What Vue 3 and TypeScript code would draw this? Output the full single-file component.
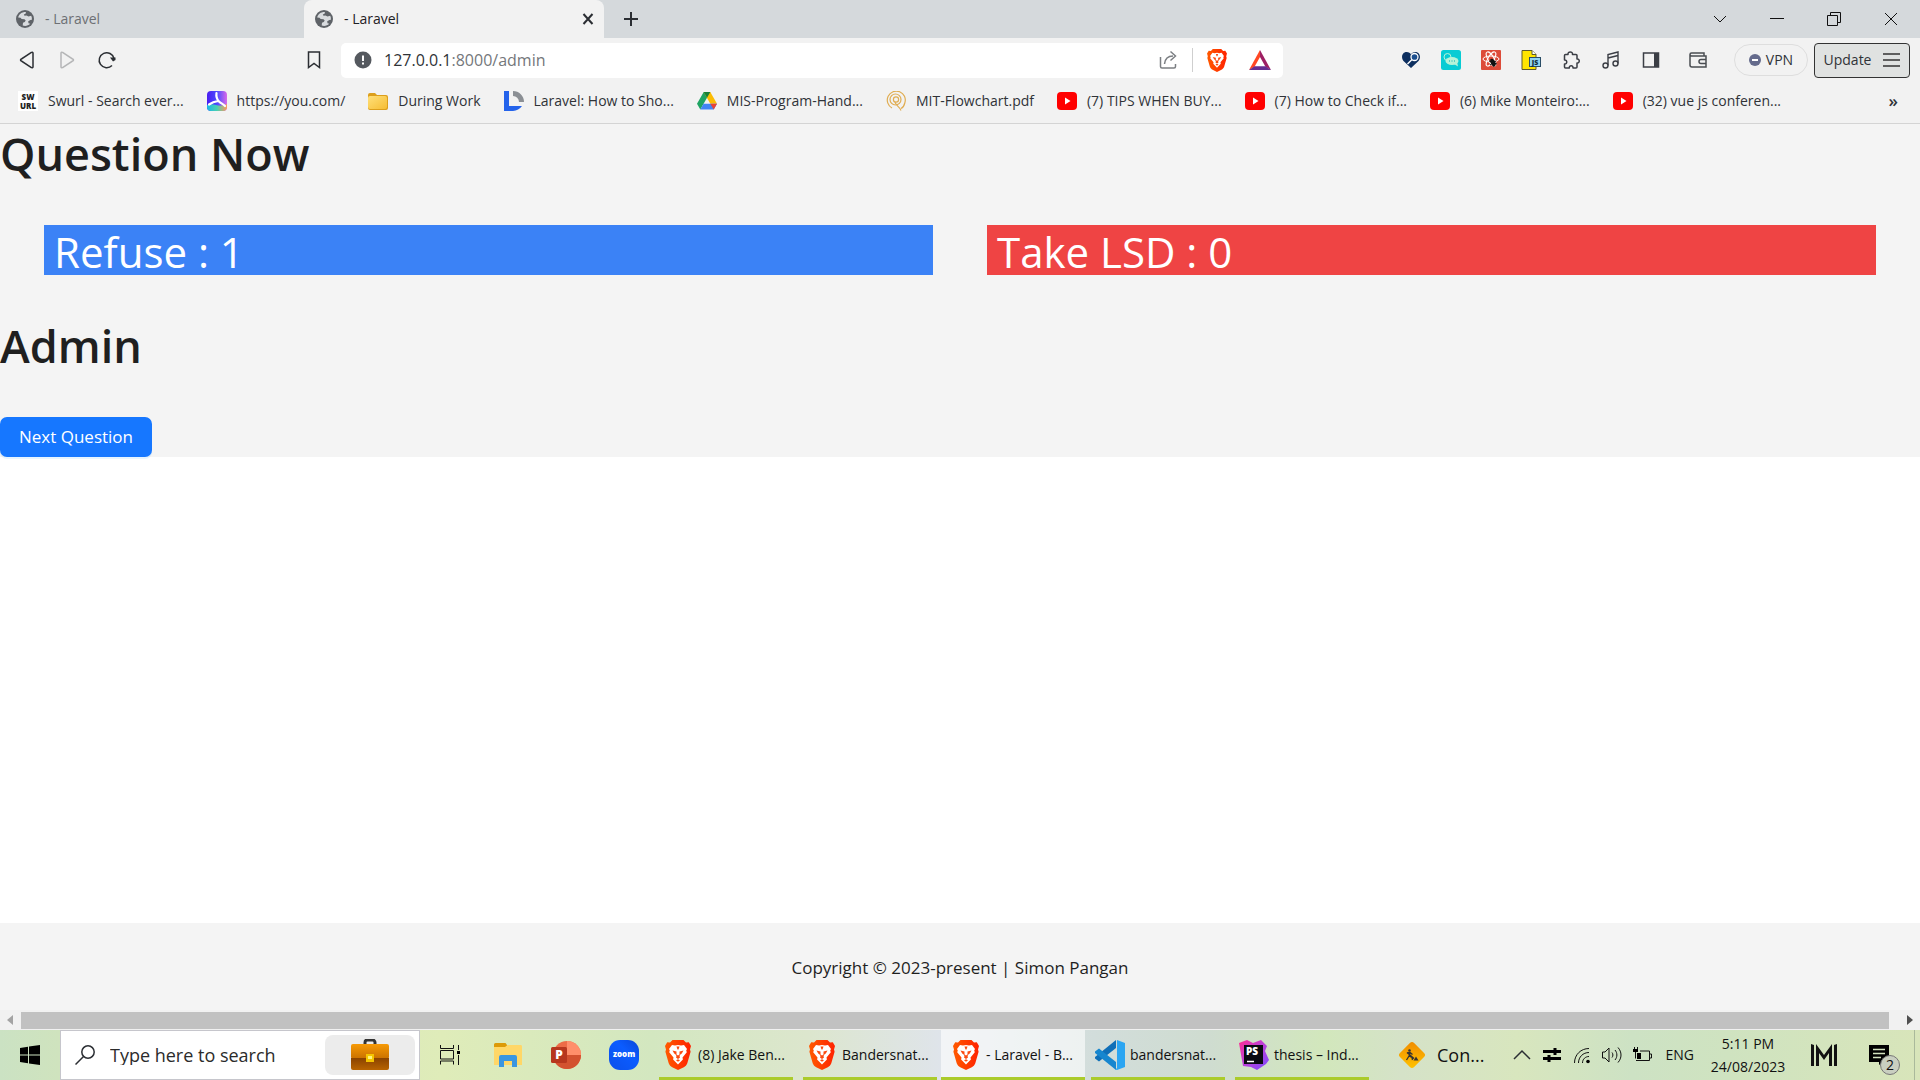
<script setup lang="ts">
interface Bookmark {
  icon: string
  label: string
  href: string
}

interface Task {
  icon: string
  label: string
  active?: boolean
}

interface Lettering {
  text: string
  x: number
  y: number
  size: number
  color: string
}

const bookmarks: Bookmark[] = [
  { icon: 'swurl', label: 'Swurl - Search ever...', href: '#swurl' },
  { icon: 'you', label: 'https://you.com/', href: '#you' },
  { icon: 'folder', label: 'During Work', href: '#during-work' },
  { icon: 'docs', label: 'Laravel: How to Sho...', href: '#laravel' },
  { icon: 'drive', label: 'MIS-Program-Hand...', href: '#mis' },
  { icon: 'mit', label: 'MIT-Flowchart.pdf', href: '#mit' },
  { icon: 'youtube', label: '(7) TIPS WHEN BUY...', href: '#tips' },
  { icon: 'youtube', label: '(7) How to Check if...', href: '#check' },
  { icon: 'youtube', label: '(6) Mike Monteiro:...', href: '#mike' },
  { icon: 'youtube', label: '(32) vue js conferen...', href: '#vue' },
]

const extensions: string[] = ['heart', 'chat', 'react', 'jsfile', 'puzzle', 'music', 'sidebar']

const tasks: Task[] = [
  { icon: 'brave', label: '(8) Jake Ben...' },
  { icon: 'brave', label: 'Bandersnat...' },
  { icon: 'brave', label: '- Laravel - B...', active: true },
  { icon: 'vscode', label: 'bandersnat...' },
  { icon: 'phpstorm', label: 'thesis – Ind...' },
]

// Letters printed on top of the icons that carry a word mark.
const lettering: Record<string, Lettering[]> = {
  swurl: [
    { text: 'SW', x: 10, y: 9, size: 8, color: '#222' },
    { text: 'URL', x: 10, y: 18, size: 8, color: '#222' },
  ],
  jsfile: [{ text: 'JS', x: 14, y: 15, size: 7, color: '#12303f' }],
  phpstorm: [{ text: 'PS', x: 13, y: 15, size: 10, color: '#fff' }],
}

const votes = { refuse: 1, take: 0 }
</script>

<template>
  <svg class="sprite" aria-hidden="true">
    <defs>
      <linearGradient id="g-brave" x1="0" y1="0" x2="1" y2="0">
        <stop offset="0" stop-color="#ff5a00" />
        <stop offset="1" stop-color="#ff2200" />
      </linearGradient>
      <linearGradient id="g-you" x1="0" y1="0" x2="1" y2="0">
        <stop offset="0" stop-color="#4a1cf0" />
        <stop offset="0.5" stop-color="#4b4bff" />
        <stop offset="1" stop-color="#d86ae8" />
      </linearGradient>
      <linearGradient id="g-you2" x1="0" y1="0" x2="1" y2="0">
        <stop offset="0" stop-color="#18b8e8" />
        <stop offset="0.5" stop-color="#4bd0b0" />
        <stop offset="1" stop-color="#ff9a5a" />
      </linearGradient>
      <linearGradient id="g-folder" x1="0" y1="0" x2="1" y2="1">
        <stop offset="0" stop-color="#ffe07a" />
        <stop offset="1" stop-color="#f6bd33" />
      </linearGradient>
      <linearGradient id="g-case" x1="0" y1="0" x2="0" y2="1">
        <stop offset="0" stop-color="#f79a05" />
        <stop offset="1" stop-color="#c97000" />
      </linearGradient>
      <linearGradient id="g-case2" x1="0" y1="0" x2="0" y2="1">
        <stop offset="0" stop-color="#8a4300" />
        <stop offset="1" stop-color="#b86400" />
      </linearGradient>
      <linearGradient id="g-zoom" x1="1" y1="0" x2="0" y2="1">
        <stop offset="0" stop-color="#0a47d8" />
        <stop offset="0.4" stop-color="#0b5cff" />
        <stop offset="1" stop-color="#0b50ea" />
      </linearGradient>
      <linearGradient id="g-ps" x1="0" y1="0" x2="1" y2="1">
        <stop offset="0" stop-color="#ff2d90" />
        <stop offset="0.45" stop-color="#c040d8" />
        <stop offset="1" stop-color="#7a4bff" />
      </linearGradient>
      <linearGradient id="g-sign" x1="0" y1="0" x2="1" y2="1">
        <stop offset="0" stop-color="#f08a00" />
        <stop offset="1" stop-color="#ffc400" />
      </linearGradient>
    </defs>

    <symbol id="globe" viewBox="0 0 18 18">
      <circle cx="9" cy="9" r="9" fill="#5f6368" />
      <path d="M10 2C6 1.800 3 4 2.200 7.500l2.300.3 1.200 1.200 2.800.2 1.200 1.300-1 1.500-1.700.8-.3 2.700c2.800.9 5.500.2 7.500-1.700l-1.700-.6-.3-1.900 2.200-1.300 1.500-.3c.1-1.500-.1-2.700-.7-3.900l-2.700.7-2-1-2 .3-.7-1.300 1.700-.7z" fill="#d9dcdf" />
    </symbol>
    <symbol id="brave" viewBox="0 0 26 30">
      <path d="M7.500 0h11l2.500 2.600 2.800-.3L26 6l-1 3.500.6 2.300-3.300 11.400c-.7 2-2 3-3.500 4L13 30l-5.800-2.800c-1.500-1-2.800-2-3.500-4L.4 11.800 1 9.500 0 6l2.200-3.700 2.800.3z" fill="url(#g-brave)" />
      <path d="M7 5l3 .6L13 5l3 .6 3-.6 3 4-.8 1.600.6 1.600-4.300 5.200.4 2L13 24.500l-4.900-5.100.4-2L4.200 12.200l.6-1.600L4 9z" fill="#fff" />
      <path d="M7.500 10.500l4 .9v3l1.500 1 1.500-1v-3l4-.9-1.700 3-1.200.8-1.100 1.700.5 1.600-2 1.400-2-1.400.5-1.600-1.100-1.700-1.200-.8zM11 20.200l2-1 2 1-2 1.600zM11.500 6.500h3l-1 3h-1z" fill="#fb4a10" />
    </symbol>
    <symbol id="bat" viewBox="0 0 22 20">
      <path d="M11 0L0 20l5.500-3.200L11 7z" fill="#ff4724" />
      <path d="M11 0l11 20-5.500-3.200L11 7z" fill="#9e1f63" />
      <path d="M0 20h22l-5.500-3.800h-11z" fill="#662d91" />
    </symbol>
    <symbol id="swurl" viewBox="0 0 20 20">
      <rect width="20" height="20" fill="#fff" />
    </symbol>
    <symbol id="you" viewBox="0 0 20 20">
      <rect width="20" height="20" rx="4" fill="url(#g-you)" />
      <path d="M0 14c3-1 6-1 9 0s7 1 11-1v3a4 4 0 0 1-4 4H4a4 4 0 0 1-4-4z" fill="url(#g-you2)" />
      <path d="M9.500 2c-.5 3.500.5 6.500 2.500 8.500 1.500 1.500 4 2.500 6 4.500M11 10c-3 .5-6 1.500-9 3.500" fill="none" stroke="#fff" stroke-width="2.200" stroke-linecap="round" />
    </symbol>
    <symbol id="folder" viewBox="0 0 20 18">
      <path d="M0 3a2 2 0 0 1 2-2h5l2 2h9a2 2 0 0 1 2 2v11a2 2 0 0 1-2 2H2a2 2 0 0 1-2-2z" fill="#dc9f1c" />
      <rect y="4" width="19" height="13" rx="2" fill="url(#g-folder)" />
    </symbol>
    <symbol id="docs" viewBox="0 0 20 20">
      <path d="M0 0h5v15h13a12 12 0 0 1-9 5H0z" fill="#2463eb" />
      <path d="M9 0a11 11 0 0 1 11 11h-5a6 6 0 0 0-6-6z" fill="#8b8f94" />
    </symbol>
    <symbol id="drive" viewBox="0 0 20 18">
      <path d="M6.700 0h6.600L6.600 11.700 3.300 17.500 0 11.700z" fill="#1fa463" />
      <path d="M6.700 0h6.600L20 11.700h-6.700z" fill="#fbbc04" />
      <path d="M6.700 0h6.600L10 5.800z" fill="#188038" />
      <path d="M6.500 11.700H20l-3.300 5.800H3.300z" fill="#4285f4" />
      <path d="M13.300 11.700H20l-3.300 5.800z" fill="#ea4335" />
    </symbol>
    <symbol id="mit" viewBox="0 0 20 20">
      <g fill="none" stroke="#e0ad52" stroke-width="1.200">
        <path d="M6 17A9 9 0 1 1 18.800 12c-.6 2.600-2 4.600-3.800 5.500" />
        <circle cx="9.500" cy="8.500" r="5.500" />
        <circle cx="10" cy="8.500" r="2.600" />
        <path d="M9 11c1 4 4 4 6 8.500" />
      </g>
    </symbol>
    <symbol id="youtube" viewBox="0 0 20 18">
      <rect width="20" height="18" rx="4" fill="#f00" />
      <path d="M8 5.500l5.500 3.500L8 12.500z" fill="#fff" />
    </symbol>
    <symbol id="heart" viewBox="0 0 20 20">
      <path d="M10 18L2.500 11C-.5 7 1.500 2 5.500 2 8 2 9.300 3.300 10 4.500 10.700 3.300 12 2 14.500 2 18.500 2 20.500 7 17.500 11z" fill="#0d2f5f" />
      <circle cx="13.500" cy="7" r="3.500" fill="#1c4f8f" stroke="#fff" stroke-width="1.300" />
      <path d="M11 9.500L6.500 14" stroke="#fff" stroke-width="1.500" />
    </symbol>
    <symbol id="chat" viewBox="0 0 20 20">
      <rect width="20" height="20" rx="2.500" fill="#08ccd4" />
      <circle cx="6.500" cy="7" r="3.500" fill="none" stroke="#b6f3d8" />
      <ellipse cx="11" cy="11" rx="6.500" ry="4" fill="#b6f3d8" />
      <path d="M13 14l4 2.500-1-5z" fill="#b6f3d8" />
      <path d="M8 11h1m1.500 0h1m1.500 0h1" stroke="#08a8ae" stroke-width="1.200" />
    </symbol>
    <symbol id="react" viewBox="0 0 20 20">
      <rect width="20" height="20" rx="1" fill="#dd4b39" />
      <g fill="none" stroke="#fff">
        <ellipse cx="10" cy="9" rx="8" ry="3" />
        <ellipse cx="10" cy="9" rx="8" ry="3" transform="rotate(60 10 9)" />
        <ellipse cx="10" cy="9" rx="8" ry="3" transform="rotate(120 10 9)" />
      </g>
      <ellipse cx="12" cy="12.500" rx="2.300" ry="4" fill="#111" transform="rotate(-25 12 12.500)" />
      <path d="M8 11l8 3M9 15l6-4M10 9l3 8" stroke="#111" />
    </symbol>
    <symbol id="jsfile" viewBox="0 0 20 20">
      <path d="M1 .5h10l4 4v15H1z" fill="#ffe500" stroke="#5c5a2c" />
      <path d="M11 .5v4h4" fill="#fff" stroke="#5c5a2c" />
      <rect x="8.500" y="7.500" width="11" height="9" fill="#8fd3f0" stroke="#2a4d66" />
    </symbol>
    <symbol id="puzzle" viewBox="0 0 20 20">
      <path d="M4.500 4.500H7C6.500 1 12 1 11.500 4.500h3.500a1 1 0 0 1 1 1V9c3-.5 3 4.500 0 4v4a1 1 0 0 1-1 1h-3c.3-3-4-3-3.700 0H4.500a1 1 0 0 1-1-1v-3c3 .3 3-4.300 0-4V5.500a1 1 0 0 1 1-1z" fill="none" stroke="#3b3e45" stroke-width="1.500" stroke-linejoin="round" />
    </symbol>
    <symbol id="music" viewBox="0 0 20 20">
      <g fill="none" stroke="#3b3e45" stroke-width="1.400">
        <circle cx="4.500" cy="15.500" r="2.500" />
        <circle cx="14.500" cy="13.500" r="2.500" />
        <path d="M7 15.500V4.500L17 2v11.500M7 8l10-2.500" />
      </g>
    </symbol>
    <symbol id="sidebar" viewBox="0 0 20 20">
      <rect x="2.500" y="3" width="15" height="14" fill="none" stroke="#3b3e45" stroke-width="1.500" />
      <path d="M13 3h5v14h-5z" fill="#3b3e45" />
    </symbol>
    <symbol id="wallet" viewBox="0 0 20 20">
      <g fill="none" stroke="#4a4d52" stroke-width="1.500">
        <path d="M16 6V3H3.500a1.500 1.500 0 0 0 0 3H18v11H4a2 2 0 0 1-2-2V4.500" />
        <path d="M18 9.500h-5a2 2 0 0 0 0 4h5" />
      </g>
    </symbol>
    <symbol id="explorer" viewBox="0 0 28 24">
      <path d="M0 1.500A1.500 1.500 0 0 1 1.500 0h10L13 2v4H0z" fill="#dc9a08" />
      <path d="M0 4h11l2.500-2h13A1.500 1.500 0 0 1 28 3.500V22H0z" fill="#ffd767" />
      <path d="M5 24V14a2 2 0 0 1 2-2h14a2 2 0 0 1 2 2v10h-5v-6h-8v6z" fill="#3a96e0" />
    </symbol>
    <symbol id="powerpoint" viewBox="0 0 30 28">
      <circle cx="16" cy="14" r="14" fill="#ed6c47" />
      <path d="M16 0a14 14 0 0 1 14 14H16z" fill="#ff8f6b" />
      <path d="M2 14h28a14 14 0 0 1-28 0z" fill="#d35230" />
      <rect y="6" width="16" height="16" rx="1.500" fill="#b7371e" />
    </symbol>
    <symbol id="zoom" viewBox="0 0 30 30">
      <rect width="30" height="30" rx="11" fill="url(#g-zoom)" />
    </symbol>
    <symbol id="vscode" viewBox="0 0 30 30">
      <path d="M21 0v8L4 21.500l-4-3V17z" fill="#0f6fb8" />
      <path d="M0 11.500l4-3L21 22v8L0 13z" fill="#1686cf" />
      <path d="M22 0l8 3v24l-8 3-1.500-.6L22 28z" fill="#2aa5f2" />
    </symbol>
    <symbol id="phpstorm" viewBox="0 0 30 30">
      <path d="M0 3l8-3 6 3 8-3 6 6-2 5 4 9-3 4-9 6-6-3-8-1z" fill="url(#g-ps)" />
      <rect x="5" y="5" width="19" height="19" fill="#0a0a12" />
      <path d="M8 21.500h7" stroke="#fff" stroke-width="1.500" />
    </symbol>
    <symbol id="roadwork" viewBox="0 0 28 28">
      <rect x="4" y="4" width="20" height="20" rx="3" fill="url(#g-sign)" transform="rotate(45 14 14)" />
      <circle cx="11.500" cy="9.500" r="1.300" fill="#333" />
      <path d="M9 12l3-.5 2.500 2M12 12l-1 3-2.500 4M11 15l3 1.500.5 2.500M9 11.500l7 6" fill="none" stroke="#333" stroke-width="1.300" />
      <path d="M15.500 19.500h5l-2.500-4z" fill="#333" />
    </symbol>
    <symbol id="briefcase" viewBox="0 0 38 32">
      <path d="M14 6V3.500A2.500 2.500 0 0 1 16.500 1h5A2.500 2.500 0 0 1 24 3.500V6" fill="none" stroke="#333" stroke-width="3" />
      <rect y="5" width="38" height="15" rx="2" fill="url(#g-case)" />
      <path d="M0 19h38v10a2 2 0 0 1-2 2H2a2 2 0 0 1-2-2z" fill="url(#g-case2)" />
      <rect x="15" y="15" width="8" height="8" fill="#f5c400" />
      <rect x="17" y="17" width="4" height="3" fill="#fff27a" />
    </symbol>
  </svg>

  <div class="screen">
    <header class="browser">
      <div class="tabs">
        <div class="tab">
          <svg class="i18"><use href="#globe" /></svg>
          <span>- Laravel</span>
        </div>
        <div class="tab active">
          <svg class="i18"><use href="#globe" /></svg>
          <span class="tab-name">- Laravel</span>
          <button aria-label="Close tab">
            <svg width="12" height="12" viewBox="0 0 12 12"><path d="M1.500 1l9 10M10.500 1l-9 10" class="line thick" /></svg>
          </button>
        </div>
        <button class="new-tab" aria-label="New tab">
          <svg width="16" height="16" viewBox="0 0 16 16"><path d="M8 1v14M1 8h14" class="line thick" /></svg>
        </button>
        <div class="window-controls">
          <button aria-label="Search tabs"><svg width="14" height="14" viewBox="0 0 14 14"><path d="M1 4l6 6 6-6" class="line" /></svg></button>
          <button aria-label="Minimize"><svg width="14" height="14" viewBox="0 0 14 14"><path d="M0 6.500h14" class="line" /></svg></button>
          <button aria-label="Restore"><svg width="14" height="14" viewBox="0 0 14 14"><path d="M.5 3.500h10v10H.5zM3.500 3V.500h10v10H11" class="line" /></svg></button>
          <button aria-label="Close"><svg width="14" height="14" viewBox="0 0 14 14"><path d="M1 1l12 12M13 1L1 13" class="line" /></svg></button>
        </div>
      </div>

      <div class="toolbar">
        <nav class="history">
          <button aria-label="Back"><svg width="20" height="20" viewBox="0 0 20 20"><path d="M16 3v14a1 1 0 0 1-1.600.5L4.500 11a1 1 0 0 1 0-2l9.900-6.500A1 1 0 0 1 16 3z" class="line mid" /></svg></button>
          <button aria-label="Forward" class="off"><svg width="20" height="20" viewBox="0 0 20 20"><path d="M4 3v14a1 1 0 0 0 1.600.5L15.500 11a1 1 0 0 0 0-2L5.600 2.500A1 1 0 0 0 4 3z" class="line mid" /></svg></button>
          <button aria-label="Reload"><svg width="20" height="20" viewBox="0 0 20 20"><path d="M15 15.500a7.500 7.500 0 1 1 2-7" class="line mid" /><path d="M13 7.500h5.500V10l-2.500 1.500z" fill="#2b2e33" /></svg></button>
        </nav>
        <button class="mark" aria-label="Bookmark this tab"><svg width="20" height="20" viewBox="0 0 20 20"><path d="M4.500 2h11v15.500L10 13.500l-5.500 4z" class="line mid" /></svg></button>
        <div class="address">
          <svg width="18" height="18" viewBox="0 0 18 18"><circle cx="9" cy="9" r="8.500" fill="#55595f" /><path d="M9 4.500v5.500M9 11.500v2" stroke="#fff" stroke-width="2" /></svg>
          <a class="url" href="#admin">127.0.0.1<span>:8000/admin</span></a>
          <button aria-label="Share"><svg width="20" height="20" viewBox="0 0 20 20"><path d="M2.500 7v9.500a1.500 1.500 0 0 0 1.500 1.500h12a1.500 1.500 0 0 0 1.500-1.500V14M6.500 14C7 9 9.500 6 15 6M12.500 1.500L17.500 6 12.500 10.500" class="line mid grey" /></svg></button>
          <i class="divider"></i>
          <svg class="shield"><use href="#brave" /></svg>
          <svg class="rewards"><use href="#bat" /></svg>
        </div>
        <div class="extensions">
          <button v-for="name in extensions" :key="name" :aria-label="name">
            <svg class="i20">
              <use :href="'#' + name" />
              <text v-for="l in lettering[name]" :key="l.text" :x="l.x" :y="l.y" :font-size="l.size" :fill="l.color" class="logo-text">{{ l.text }}</text>
            </svg>
          </button>
        </div>
        <button class="wallet" aria-label="Wallet"><svg class="i20"><use href="#wallet" /></svg></button>
        <button class="vpn">
          <svg width="12" height="12" viewBox="0 0 12 12"><circle cx="6" cy="6" r="6" fill="#656b8c" /><path d="M3 6h6" stroke="#fff" stroke-width="2" /></svg>
          VPN
        </button>
        <button class="update">
          Update
          <svg width="17" height="14" viewBox="0 0 17 14"><path d="M0 1h17M0 7h17M0 13h17" stroke="#333" stroke-width="1.500" /></svg>
        </button>
      </div>

      <nav class="bookmarks">
        <a v-for="b in bookmarks" :key="b.href" :href="b.href">
          <svg class="i20">
            <use :href="'#' + b.icon" />
            <text v-for="l in lettering[b.icon]" :key="l.text" :x="l.x" :y="l.y" :font-size="l.size" :fill="l.color" class="logo-text">{{ l.text }}</text>
          </svg>
          <span>{{ b.label }}</span>
        </a>
        <button class="more" aria-label="More bookmarks">»</button>
      </nav>
    </header>

    <main class="page">
      <section class="content">
        <h1>Question Now</h1>
        <div class="votes">
          <div class="vote refuse">Refuse : {{ votes.refuse }}</div>
          <div class="vote take">Take LSD : {{ votes.take }}</div>
        </div>
        <h1>Admin</h1>
        <button class="next">Next Question</button>
      </section>
      <footer class="footer">Copyright © 2023-present | Simon Pangan</footer>
    </main>

    <div class="scrollbar">
      <svg width="6" height="10" viewBox="0 0 6 10"><path d="M6 0v10L0 5z" fill="#a3a3a3" /></svg>
      <div class="thumb"></div>
      <svg width="6" height="10" viewBox="0 0 6 10"><path d="M0 0v10l6-5z" fill="#505050" /></svg>
    </div>

    <div class="taskbar">
      <button class="start" aria-label="Start">
        <svg width="20" height="20" viewBox="0 0 20 20"><path d="M0 3l8-1.200V9.500H0zM9 1.600L20 0v9.500H9zM0 10.500h8v7.700L0 17zM9 10.500h11V20L9 18.400z" /></svg>
      </button>
      <label class="search">
        <svg width="20" height="20" viewBox="0 0 20 20"><circle cx="13" cy="7" r="6.200" class="line mid" /><path d="M8.500 11.500L.5 19.500" class="line mid" /></svg>
        <input type="text" placeholder="Type here to search" aria-label="Type here to search" />
        <span class="chip"><svg width="38" height="32"><use href="#briefcase" /></svg></span>
      </label>
      <div class="pinned">
        <button aria-label="Task view">
          <svg width="20" height="20" viewBox="0 0 20 20"><path d="M.5 0v3.500h13V0M.5 5.500h13v8.500H.5zM.5 19.500V16h13v3.500M18.500 0v5M18.500 10v10" class="line" /><rect x="17" y="6" width="3" height="3" /></svg>
        </button>
        <button aria-label="File Explorer"><svg width="28" height="24"><use href="#explorer" /></svg></button>
        <button aria-label="PowerPoint">
          <svg width="30" height="28">
            <use href="#powerpoint" />
            <text x="8" y="18" font-size="12" fill="#fff" class="logo-text">P</text>
          </svg>
        </button>
        <button aria-label="Zoom">
          <svg width="30" height="30">
            <use href="#zoom" />
            <text x="15" y="17" font-size="8" fill="#fff" class="logo-text">zoom</text>
          </svg>
        </button>
      </div>
      <div class="tasks">
        <button v-for="t in tasks" :key="t.label" :class="{ active: t.active }">
          <svg width="30" height="30">
            <use :href="'#' + t.icon" />
            <text v-for="l in lettering[t.icon]" :key="l.text" :x="l.x" :y="l.y" :font-size="l.size" :fill="l.color" class="logo-text">{{ l.text }}</text>
          </svg>
          <span>{{ t.label }}</span>
        </button>
      </div>
      <button class="news">
        <svg width="28" height="28"><use href="#roadwork" /></svg>
        <span>Con...</span>
      </button>
      <div class="tray">
        <svg width="20" height="20" viewBox="0 0 20 20"><path d="M2 14l8-8 8 8" class="line mid" /></svg>
        <svg width="20" height="20" viewBox="0 0 20 20"><path d="M1 6.500h18M1 13.500h18" stroke="#000" stroke-width="3" /><path d="M13 3v7M7 10v7" stroke="#000" stroke-width="3" /></svg>
        <svg width="20" height="20" viewBox="0 0 20 20"><path d="M2.500 18C2.500 9.500 9 3.500 17 3.500M6.500 18C6.500 12 11 7.500 17 7.500M10.500 18c0-4 3-6.500 6.500-6.500" class="line" /><circle cx="16" cy="16.500" r="1.800" /></svg>
        <svg width="20" height="20" viewBox="0 0 20 20"><path d="M.5 7v6H3l4 4V3L3 7zM10 7.500c1.200 1.500 1.200 3.500 0 5M13 5c2.500 3 2.500 7 0 10M16 2.500c4 4.500 4 10.500 0 15" class="line" /></svg>
        <svg width="20" height="20" viewBox="0 0 20 20"><path d="M2.500 2v3M5.500 2v3M3.500 6v7.500M4 15.500h13.500v-9.500H8M18 9h1.500v4H18" class="line" /><path d="M1 4h5v3H1zM5 8h4v6H5z" /></svg>
      </div>
      <span class="lang">ENG</span>
      <div class="clock"><span>5:11 PM</span><span>24/08/2023</span></div>
      <svg class="mlogo" width="26" height="22" viewBox="0 0 26 22"><path d="M0 0l3 1v21H0zM5 0l8 11 8-11v22h-3v-13L13 16 8 9v13H5zM26 0l-3 1v21h3z" fill="#111" /></svg>
      <button class="notice" aria-label="Notifications">
        <svg width="20" height="20" viewBox="0 0 20 20"><path d="M0 0h20v17h-6l-4 3v-3H0z" /><path d="M4 4.500h12M4 8.500h12M4 12.500h8" stroke="#d3e2bf" stroke-width="1.500" /></svg>
        <span class="badge">2</span>
      </button>
    </div>
  </div>
</template>

<style>
body {
  margin: 0;
}
</style>

<style scoped>
.sprite {
  position: absolute;
  width: 0;
  height: 0;
}
.logo-text {
  font-family: "Open Sans", sans-serif;
  font-weight: 800;
  text-anchor: middle;
}
.screen {
  display: flex;
  flex-direction: column;
  min-height: 100vh;
  font-family: "Open Sans", "Noto Sans", sans-serif;
  font-size: 14px;
  line-height: 20px;
  color: #303338;
  background: #fff;
}
button {
  display: flex;
  align-items: center;
  justify-content: center;
  padding: 0;
  border: 0;
  background: none;
  font: inherit;
  color: inherit;
}
a {
  color: inherit;
  text-decoration: none;
}
svg {
  flex: none;
}
.i18 {
  width: 18px;
  height: 18px;
}
.i20 {
  width: 20px;
  height: 20px;
}
.line {
  fill: none;
  stroke: #111;
  stroke-width: 1;
}
.mid {
  stroke: #2b2e33;
  stroke-width: 1.5;
}
.thick {
  stroke: #2b2e33;
  stroke-width: 2;
}
.grey {
  stroke: #7c7f83;
}

.browser {
  background: #f2f2f2;
  border-bottom: 1px solid #d4d4d4;
}
.tabs {
  display: flex;
  height: 38px;
  background: #d5d9dc;
}
.tab {
  display: flex;
  align-items: center;
  gap: 11px;
  box-sizing: border-box;
  width: 304px;
  padding: 0 10px 0 16px;
  color: #6d7074;
}
.tab.active {
  width: 300px;
  padding-left: 11px;
  background: #f2f2f2;
  border-radius: 8px 8px 0 0;
  color: #1f2125;
}
.tab-name {
  flex: 1;
}
.new-tab {
  width: 54px;
}
.window-controls {
  display: flex;
  margin-left: auto;
  padding-right: 1px;
}
.window-controls button {
  width: 57px;
}

.toolbar {
  display: flex;
  align-items: center;
  height: 44px;
  padding: 0 10px 0 7px;
}
.history {
  display: flex;
}
.history button,
.extensions button {
  width: 40px;
  height: 36px;
}
.history .off {
  opacity: 0.3;
}
.mark {
  width: 40px;
  margin-left: 167px;
}
.address {
  display: flex;
  align-items: center;
  flex: 1;
  height: 35px;
  margin-left: 7px;
  padding: 0 12px 0 13px;
  background: #fff;
  border-radius: 5px;
}
.url {
  flex: 1;
  margin-left: 12px;
  font-size: 16px;
}
.url span {
  color: #74777b;
}
.divider {
  width: 1px;
  height: 24px;
  margin: 0 14px;
  background: #cfcfcf;
}
.shield {
  width: 20px;
  height: 23px;
}
.rewards {
  width: 22px;
  height: 20px;
  margin-left: 22px;
}
.extensions {
  display: flex;
  margin-left: 108px;
}
.wallet {
  width: 40px;
  margin-left: 7px;
}
.vpn {
  gap: 5px;
  width: 74px;
  height: 32px;
  margin-left: 16px;
  border: 1px solid #dedede;
  border-radius: 16px;
}
.update {
  gap: 12px;
  width: 96px;
  height: 35px;
  margin-left: 6px;
  border: 1px solid #333;
  border-radius: 4px;
  background: #e0e2e1;
}
.bookmarks {
  display: flex;
  align-items: center;
  gap: 23px;
  height: 37px;
  padding: 0 22px 4px 18px;
}
.bookmarks a {
  display: flex;
  align-items: center;
  gap: 10px;
  white-space: nowrap;
}
.more {
  margin-left: auto;
  font-size: 17px;
  font-weight: 600;
}

.page {
  display: flex;
  flex: 1;
  flex-direction: column;
  justify-content: space-between;
}
.content {
  background: #f4f4f4;
}
h1 {
  margin: 0;
  padding-top: 2px;
  font-size: 45px;
  line-height: 56px;
  font-weight: 600;
  color: #1f1f1f;
}
.votes {
  display: flex;
  gap: 54px;
  padding: 43px 44px 41px;
}
.vote {
  flex: 1;
  padding: 4px 10px 0;
  font-size: 42px;
  line-height: 46px;
  color: #fff;
}
.refuse {
  background: #3b82f6;
}
.take {
  background: #ef4444;
}
.next {
  height: 40px;
  margin-top: 43px;
  padding: 0 19px;
  border-radius: 7px;
  background: #1677ff;
  box-shadow: 0 2px 0 rgba(5, 145, 255, 0.1);
  font-size: 17px;
  color: #fff;
}
.footer {
  padding: 33px 20px 30px;
  background: #f4f4f4;
  font-size: 17px;
  line-height: 24px;
  text-align: center;
  color: #1f1f1f;
}

.scrollbar {
  display: flex;
  align-items: center;
  justify-content: space-between;
  height: 20px;
  padding: 0 7px;
  background: #f1f1f1;
}
.thumb {
  flex: 1;
  height: 17px;
  margin: 0 18px 0 8px;
  background: #c1c1c1;
}

.taskbar {
  display: flex;
  align-items: center;
  height: 50px;
  color: #111;
  background: linear-gradient(90deg, #cbe2c3 0%, #cfe3be 3%, #dfecb9 23%, #d3e7c0 34%, #dce6cd 42%, #dfe4ea 49%, #d2dddb 57%, #cfdcd0 63%, #d2e7bc 69%, #d5e2c8 73%, #d8e6be 79%, #cde2c4 85%, #cfe3c0 90%, #d8e5ba 100%);
}
.taskbar button {
  height: 50px;
}
.start {
  width: 60px;
}
.search {
  display: flex;
  align-items: center;
  box-sizing: border-box;
  width: 360px;
  height: 50px;
  padding: 0 4px 0 14px;
  border: 1px solid #c6c6cc;
  background: #fff;
}
.search input {
  flex: 1;
  min-width: 0;
  margin-left: 15px;
  padding: 0;
  border: 0;
  outline: 0;
  background: none;
  font: inherit;
  font-size: 18px;
}
.search input::placeholder {
  color: #2b2b2b;
  opacity: 1;
}
.chip {
  display: flex;
  align-items: center;
  justify-content: center;
  width: 90px;
  height: 40px;
  border-radius: 8px;
  background: #ececec;
}
.pinned {
  display: flex;
  padding-left: 1px;
}
.pinned button {
  width: 58px;
}
.tasks {
  display: flex;
}
.tasks button {
  justify-content: flex-start;
  gap: 5px;
  box-sizing: border-box;
  width: 144px;
  padding-left: 10px;
  background: linear-gradient(#abcb2c, #abcb2c) 6px 100% / 134px 3px no-repeat;
  white-space: nowrap;
}
.tasks .active {
  background: linear-gradient(#abcb2c, #abcb2c) 0 100% / 100% 3px no-repeat, rgba(255, 255, 255, 0.6);
}
.news {
  gap: 11px;
  margin-left: 25px;
  font-size: 18px;
}
.tray {
  display: flex;
  gap: 10px;
  margin-left: auto;
}
.lang {
  margin-left: 14px;
}
.clock {
  display: flex;
  flex-direction: column;
  align-items: center;
  width: 80px;
  margin-left: 14px;
  line-height: 23px;
}
.mlogo {
  margin-left: 23px;
}
.notice {
  position: relative;
  box-sizing: border-box;
  width: 48px;
  margin: 0 5px 0 30px;
  padding-right: 24px;
  border-right: 1px solid #aab99b;
}
.badge {
  position: absolute;
  right: 14px;
  bottom: 5px;
  width: 18px;
  border: 1px solid #777;
  border-radius: 50%;
  background: #c9cfc0;
  line-height: 18px;
}
</style>
